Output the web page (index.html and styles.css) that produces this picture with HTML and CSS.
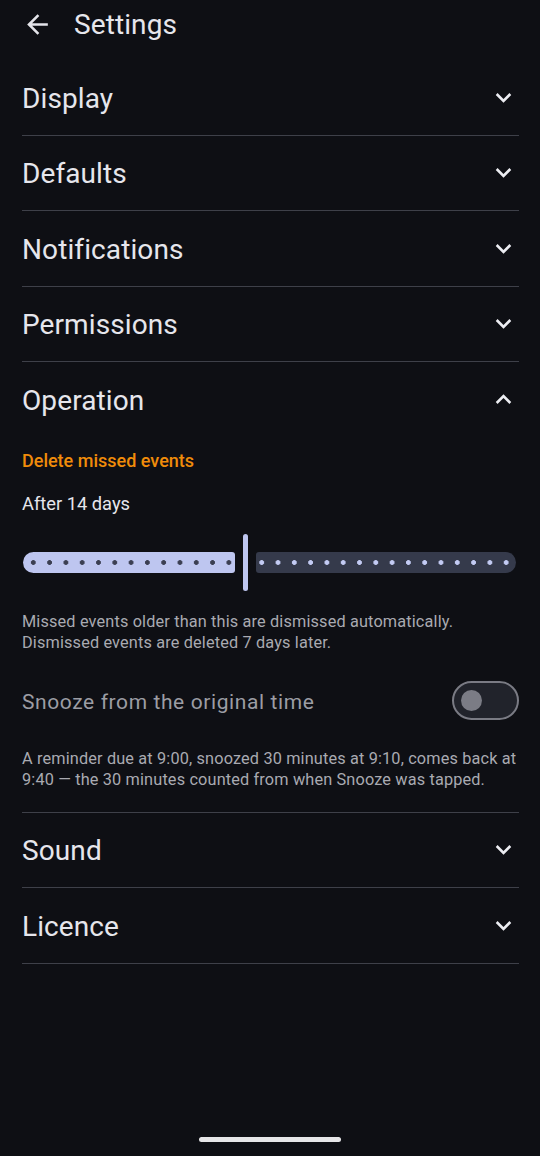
FILE: index.html
```html
<!DOCTYPE html>
<html lang="en">
<head>
<meta charset="utf-8">
<title>Settings</title>
<link rel="stylesheet" href="styles.css">
</head>
<body>
<div class="screen">
  <header class="topbar">
    <button class="icon-btn back" aria-label="Back">
      <svg viewBox="0 0 24 24" width="31" height="31"><path d="M20 11H7.83l5.59-5.59L12 4l-8 8 8 8 1.41-1.41L7.83 13H20v-2z" fill="currentColor"/></svg>
    </button>
    <h1 class="title">Settings</h1>
  </header>

  <main class="list">
    <section class="group">
      <div class="group-head"><span class="group-title">Display</span>
        <svg class="chev" viewBox="0 0 24 24" width="31" height="31"><path d="M7.41 8.59 12 13.17l4.59-4.58L18 10l-6 6-6-6z" fill="currentColor"/></svg></div>
    </section>
    <section class="group">
      <div class="group-head"><span class="group-title">Defaults</span>
        <svg class="chev" viewBox="0 0 24 24" width="31" height="31"><path d="M7.41 8.59 12 13.17l4.59-4.58L18 10l-6 6-6-6z" fill="currentColor"/></svg></div>
    </section>
    <section class="group">
      <div class="group-head"><span class="group-title">Notifications</span>
        <svg class="chev" viewBox="0 0 24 24" width="31" height="31"><path d="M7.41 8.59 12 13.17l4.59-4.58L18 10l-6 6-6-6z" fill="currentColor"/></svg></div>
    </section>
    <section class="group">
      <div class="group-head"><span class="group-title">Permissions</span>
        <svg class="chev" viewBox="0 0 24 24" width="31" height="31"><path d="M7.41 8.59 12 13.17l4.59-4.58L18 10l-6 6-6-6z" fill="currentColor"/></svg></div>
    </section>
    <section class="group open">
      <div class="group-head"><span class="group-title">Operation</span>
        <svg class="chev" viewBox="0 0 24 24" width="31" height="31"><path d="M12 8l-6 6 1.41 1.41L12 10.83l4.59 4.58L18 14z" fill="currentColor"/></svg></div>
      <div class="group-body">
        <div class="sub-title">Delete missed events</div>
        <div class="value">After 14 days</div>
        <div class="slider">
          <div class="track active"></div>
          <div class="thumb"></div>
          <div class="track inactive"></div>
        </div>
        <p class="hint first-hint">Missed events older than this are dismissed automatically.<br>Dismissed events are deleted 7 days later.</p>
        <div class="toggle-row">
          <span class="toggle-label">Snooze from the original time</span>
          <span class="switch"><span class="knob"></span></span>
        </div>
        <p class="hint second-hint">A reminder due at 9:00, snoozed 30 minutes at 9:10, comes back at 9:40 — the 30 minutes counted from when Snooze was tapped.</p>
      </div>
    </section>
    <section class="group">
      <div class="group-head"><span class="group-title">Sound</span>
        <svg class="chev" viewBox="0 0 24 24" width="31" height="31"><path d="M7.41 8.59 12 13.17l4.59-4.58L18 10l-6 6-6-6z" fill="currentColor"/></svg></div>
    </section>
    <section class="group">
      <div class="group-head"><span class="group-title">Licence</span>
        <svg class="chev" viewBox="0 0 24 24" width="31" height="31"><path d="M7.41 8.59 12 13.17l4.59-4.58L18 10l-6 6-6-6z" fill="currentColor"/></svg></div>
    </section>
  </main>

  <div class="nav-handle"></div>
</div>
</body>
</html>
```

FILE: styles.css
```css
html, body {
  margin: 0;
  padding: 0;
  background: #0e0f14;
}
body {
  font-family: Roboto, "Noto Sans", "Liberation Sans", sans-serif;
  color: #e4e4ea;
}
.screen {
  width: 540px;
  height: 1156px;
  display: flex;
  flex-direction: column;
  position: relative;
  overflow: hidden;
}
.topbar {
  height: 48px;
  display: flex;
  align-items: center;
  padding-left: 22px;
  margin-bottom: 12px;
}
.icon-btn {
  background: none;
  border: 0;
  padding: 0;
  color: #e4e4ea;
  width: 31px;
  height: 31px;
  display: flex;
}
.title {
  margin: 0 0 0 21px;
  font-size: 28px;
  font-weight: 400;
  color: #e6e6ec;
  letter-spacing: 0.1px;
}
.list {
  padding: 0 21px 0 22px;
  display: flex;
  flex-direction: column;
}
.group {
  border-bottom: 1px solid #3e4049;
}
.group-head {
  height: 74.5px;
  display: flex;
  align-items: center;
  justify-content: space-between;
}
.group-title {
  font-size: 28px;
  font-weight: 400;
  color: #e6e6ec;
  letter-spacing: 0.1px;
  padding-top: 2px;
}
.chev {
  color: #ecedf2;
  margin-right: 0;
}
.group-body {
  padding-bottom: 21.5px;
}
.sub-title {
  margin-top: 12px;
  font-size: 18px;
  line-height: 24px;
  font-weight: 500;
  color: #f08c0a;
}
.value {
  margin-top: 19px;
  font-size: 18.3px;
  line-height: 24px;
  color: #e6e6ec;
}
.slider {
  margin-top: 17px;
  height: 60px;
  display: flex;
  align-items: center;
  margin-left: 1px;
  margin-right: 3px;
}
.track {
  height: 21px;
  background-repeat: repeat-x;
  background-size: 16.3px 21px;
}
.track.active {
  width: 212px;
  background-color: #bec6f0;
  border-radius: 10.5px 3px 3px 10.5px;
  background-image: radial-gradient(circle at center, #3b3f52 2.1px, transparent 2.6px);
  background-position: 2.15px 0;
}
.thumb {
  width: 4.5px;
  height: 57px;
  border-radius: 2.5px;
  background: #bec6f0;
  margin: 0 8px;
}
.track.inactive {
  flex: 1;
  background-color: #353a4b;
  border-radius: 3px 10.5px 10.5px 3px;
  background-image: radial-gradient(circle at center, #c3cbf3 2.1px, transparent 2.6px);
  background-position: -2.45px 0;
}
.hint {
  margin: 0;
  font-size: 16.3px;
  line-height: 21px;
  color: #a9aab1;
  letter-spacing: 0.15px;
}
.first-hint {
  margin-top: 18.5px;
}
.toggle-row {
  margin-top: 25.5px;
  height: 44px;
  display: flex;
  align-items: center;
  justify-content: space-between;
}
.toggle-label {
  font-size: 21px;
  color: #9c9da4;
  letter-spacing: 0.6px;
  padding-top: 2px;
}
.switch {
  box-sizing: content-box;
  width: 56px;
  height: 35px;
  border: 2.6px solid #7a7b84;
  border-radius: 21px;
  background: #21232b;
  display: flex;
  align-items: center;
  padding-left: 7px;
  margin-right: 0;
}
.knob {
  width: 21px;
  height: 21px;
  border-radius: 50%;
  background: #7b7c85;
}
.second-hint {
  margin-top: 25.5px;
}
.nav-handle {
  position: absolute;
  left: 199px;
  top: 1137px;
  width: 142px;
  height: 5px;
  border-radius: 3px;
  background: #e6e6e8;
}
```
